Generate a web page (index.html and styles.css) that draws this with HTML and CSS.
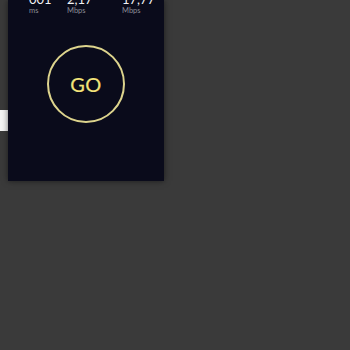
FILE: index.html
```html
<!DOCTYPE html>
<html>
<head>
<meta charset="utf-8">
<link rel="stylesheet" href="styles.css">
</head>
<body>
<div class="page">
  <div class="side"><div class="tab"></div></div>
  <div class="card">
    <div class="stats">
      <div class="stat"><div class="val">001</div><div class="unit">ms</div></div>
      <div class="stat"><div class="val">2,17</div><div class="unit">Mbps</div></div>
      <div class="stat"><div class="val">17,77</div><div class="unit">Mbps</div></div>
    </div>
    <div class="go-wrap">
      <div class="go">GO</div>
    </div>
  </div>
</div>
</body>
</html>
```
FILE: styles.css
```css
html, body {
  margin: 0;
  padding: 0;
  background: #3a3a3a;
  height: 350px;
  overflow: hidden;
  font-family: Lato, "Open Sans", sans-serif;
}
.page {
  display: flex;
  align-items: flex-start;
}
.side {
  width: 8px;
  padding-top: 110px;
}
.tab {
  width: 8px;
  height: 21px;
  background: #f4f4f4;
}
.card {
  width: 156px;
  height: 181px;
  background: #0a0b1b;
  box-shadow: 0 0 6px rgba(0, 0, 0, 0.55);
  display: flex;
  flex-direction: column;
}
.stats {
  display: grid;
  grid-template-columns: 38px 55px 1fr;
  padding-left: 21px;
  margin-top: -7px;
}
.val {
  color: #f2f2f4;
  font-size: 13px;
  line-height: 13px;
}
.unit {
  color: #8a8d97;
  font-size: 7.5px;
  line-height: 9px;
  margin-top: 0;
}
.go-wrap {
  display: flex;
  justify-content: center;
  margin-top: 30px;
}
.go {
  width: 74px;
  height: 74px;
  border: 2px solid #ddd48d;
  border-radius: 50%;
  display: flex;
  align-items: center;
  justify-content: center;
  color: #f4e47a;
  font-size: 20px;
  letter-spacing: 0.5px;
  -webkit-text-stroke: 0.2px #f4e47a;
}
```
